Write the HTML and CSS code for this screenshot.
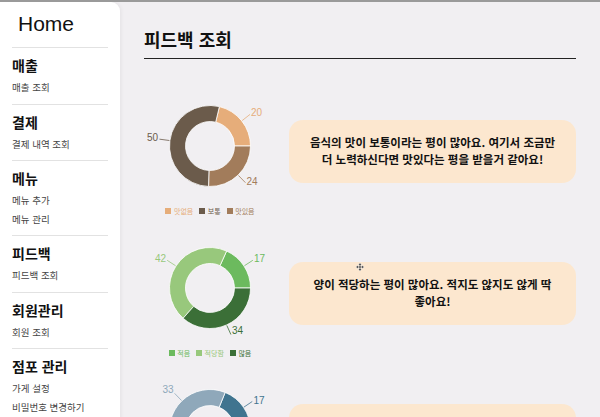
FILE: index.html
```html
<!DOCTYPE html>
<html lang="ko">
<head>
<meta charset="utf-8">
<title>피드백 조회</title>
<link rel="stylesheet" href="styles.css">
</head>
<body>
<aside class="sidebar">
  <div class="home">Home</div>
  <section class="nav-sec">
    <div class="nav-title">매출</div>
    <ul class="nav-sub"><li>매출 조회</li></ul>
  </section>
  <section class="nav-sec">
    <div class="nav-title">결제</div>
    <ul class="nav-sub"><li>결제 내역 조회</li></ul>
  </section>
  <section class="nav-sec">
    <div class="nav-title">메뉴</div>
    <ul class="nav-sub"><li>메뉴 추가</li><li>메뉴 관리</li></ul>
  </section>
  <section class="nav-sec">
    <div class="nav-title">피드백</div>
    <ul class="nav-sub"><li>피드백 조회</li></ul>
  </section>
  <section class="nav-sec">
    <div class="nav-title">회원관리</div>
    <ul class="nav-sub"><li>회원 조회</li></ul>
  </section>
  <section class="nav-sec">
    <div class="nav-title">점포 관리</div>
    <ul class="nav-sub"><li>가게 설정</li><li>비밀번호 변경하기</li></ul>
  </section>
</aside>

<main class="main">
  <h1 class="page-title">피드백 조회</h1>

  <div class="row">
    <div class="chart">
      <svg class="donut" width="132" height="120" viewBox="0 0 132 120">
        <g stroke="#fff" stroke-width="0.8">
          <path fill="#e6ad7a" d="M106.5 60 A40.5 40.5 0 0 0 75.38 20.6 L71.68 36.17 A24.5 24.5 0 0 1 90.5 60 Z"/>
          <path fill="#6b5b4b" d="M75.38 20.6 A40.5 40.5 0 1 0 64.66 100.48 L65.19 84.49 A24.5 24.5 0 1 1 71.68 36.17 Z"/>
          <path fill="#a27c5b" d="M64.66 100.48 A40.5 40.5 0 0 0 106.5 60 L90.5 60 A24.5 24.5 0 0 1 65.19 84.49 Z"/>
        </g>
        <g fill="none" stroke-width="0.8">
          <path stroke="#e6ad7a" d="M98.18 34.59 L106.02 28.39"/>
          <path stroke="#6b5b4b" d="M25.37 54.51 L15.46 53.17"/>
          <path stroke="#a27c5b" d="M94.48 89.49 L101.43 96.68"/>
        </g>
        <text class="lbl" x="107" y="30" fill="#e6ad7a">20</text>
        <text class="lbl" x="14" y="55" fill="#6b5b4b" text-anchor="end">50</text>
        <text class="lbl" x="102.5" y="98.5" fill="#a27c5b">24</text>
      </svg>
      <ul class="legend">
        <li class="lg-item" style="color:#e6ad7a"><span class="sq"></span>맛없음</li>
        <li class="lg-item" style="color:#6b5b4b"><span class="sq"></span>보통</li>
        <li class="lg-item" style="color:#a27c5b"><span class="sq"></span>맛있음</li>
      </ul>
    </div>
    <div class="card">음식의 맛이 보통이라는 평이 많아요. 여기서 조금만<br>더 노력하신다면 맛있다는 평을 받을거 같아요!</div>
  </div>

  <div class="row">
    <div class="chart">
      <svg class="donut" width="132" height="120" viewBox="0 0 132 120">
        <g stroke="#fff" stroke-width="0.8">
          <path fill="#6cba5e" d="M106.5 60 A40.5 40.5 0 0 0 82.6 23.06 L76.04 37.65 A24.5 24.5 0 0 1 90.5 60 Z"/>
          <path fill="#98c87c" d="M82.6 23.06 A40.5 40.5 0 0 0 39.11 90.29 L49.73 78.32 A24.5 24.5 0 0 1 76.04 37.65 Z"/>
          <path fill="#3b6f37" d="M39.11 90.29 A40.5 40.5 0 0 0 106.5 60 L90.5 60 A24.5 24.5 0 0 1 49.73 78.32 Z"/>
        </g>
        <g fill="none" stroke-width="0.8">
          <path stroke="#6cba5e" d="M100.42 37.73 L108.82 32.3"/>
          <path stroke="#98c87c" d="M31.58 37.73 L23.18 32.3"/>
          <path stroke="#3b6f37" d="M82.81 97.4 L86.9 106.52"/>
        </g>
        <text class="lbl" x="110" y="34" fill="#6cba5e">17</text>
        <text class="lbl" x="22" y="34" fill="#98c87c" text-anchor="end">42</text>
        <text class="lbl" x="88" y="106" fill="#3b6f37">34</text>
      </svg>
      <ul class="legend">
        <li class="lg-item" style="color:#6cba5e"><span class="sq"></span>적음</li>
        <li class="lg-item" style="color:#98c87c"><span class="sq"></span>적당함</li>
        <li class="lg-item" style="color:#3b6f37"><span class="sq"></span>많음</li>
      </ul>
    </div>
    <div class="card">양이 적당하는 평이 많아요. 적지도 않지도 않게 딱<br>좋아요!</div>
  </div>

  <div class="row">
    <div class="chart">
      <svg class="donut" width="132" height="120" viewBox="0 0 132 120">
        <g stroke="#fff" stroke-width="0.8">
          <path fill="#40748f" d="M106.5 60 A40.5 40.5 0 0 0 81.17 22.45 L75.18 37.28 A24.5 24.5 0 0 1 90.5 60 Z"/>
          <path fill="#8fa8ba" d="M81.17 22.45 A40.5 40.5 0 0 0 27.94 73.85 L42.98 68.38 A24.5 24.5 0 0 1 75.18 37.28 Z"/>
          <path fill="#2c4d63" d="M27.94 73.85 A40.5 40.5 0 0 0 106.5 60 L90.5 60 A24.5 24.5 0 0 1 42.98 68.38 Z"/>
        </g>
        <g fill="none" stroke-width="0.8">
          <path stroke="#40748f" d="M99.99 37.07 L108.28 31.48"/>
          <path stroke="#8fa8ba" d="M37.52 30.51 L30.57 23.32"/>
        </g>
        <text class="lbl" x="109.5" y="34" fill="#40748f">17</text>
        <text class="lbl" x="29.5" y="23" fill="#8fa8ba" text-anchor="end">33</text>
      </svg>
      <div class="legend"></div>
    </div>
    <div class="card"></div>
  </div>
</main>

<svg class="cursor" width="8" height="8" viewBox="0 0 16 16">
  <path d="M8 0 L11.5 3.5 H9.2 V6.8 H12.5 V4.5 L16 8 L12.5 11.5 V9.2 H9.2 V12.5 H11.5 L8 16 L4.5 12.5 H6.8 V9.2 H3.5 V11.5 L0 8 L3.5 4.5 V6.8 H6.8 V3.5 H4.5 Z" fill="#111" stroke="#fff" stroke-width="1"/>
</svg>
</body>
</html>
```

FILE: styles.css
```css
html, body {
  margin: 0;
  padding: 0;
  height: 417px;
  overflow: hidden;
}

body {
  box-sizing: border-box;
  border-top: 2px solid #9a9a9a;
  background: #f1eff2;
  display: flex;
  font-family: "Noto Sans CJK KR", "Noto Sans", sans-serif;
  color: #111;
  position: relative;
}

.sidebar {
  width: 120px;
  flex: 0 0 120px;
  height: 440px;
  background: #fff;
  border-radius: 0 9px 0 0;
  box-shadow: 1px 0 4px rgba(0, 0, 0, 0.06);
}

.home {
  font-family: "Liberation Sans", Arial, sans-serif;
  font-size: 21px;
  line-height: 26px;
  padding: 9px 0 0 18px;
  margin-bottom: 10px;
  color: #111;
}

.nav-sec {
  margin: 0 12px;
  border-top: 1px solid #e2e2e2;
  padding: 7px 0 7px;
}

.nav-title {
  font-size: 14px;
  font-weight: 700;
  line-height: 20px;
  color: #111;
}

.nav-sub {
  list-style: none;
  margin: 3px 0 0;
  padding: 0;
}

.nav-sub li {
  font-size: 9.5px;
  line-height: 18.5px;
  color: #444;
}

.main {
  flex: 1;
  padding: 0 24px;
  overflow: hidden;
}

.page-title {
  margin: 0;
  padding: 24px 0 6px;
  font-size: 18px;
  line-height: 26px;
  font-weight: 700;
  color: #111;
  border-bottom: 1px solid #222;
}

.row {
  display: flex;
  align-items: center;
  margin-top: 12px;
}

.page-title + .row {
  margin-top: 27px;
}

.chart {
  width: 132px;
  flex: 0 0 132px;
  display: flex;
  flex-direction: column;
}

.donut {
  display: block;
}

.lbl {
  font-family: "Liberation Sans", Arial, sans-serif;
  font-size: 10px;
}

.legend {
  list-style: none;
  margin: 0;
  padding: 0;
  height: 10px;
  display: flex;
  justify-content: center;
  align-items: center;
  gap: 6px;
}

.lg-item {
  display: flex;
  align-items: center;
  gap: 2.5px;
  font-size: 7px;
  line-height: 10px;
}

.sq {
  width: 6px;
  height: 6px;
  background: currentColor;
}

.card {
  flex: 1;
  margin-left: 13px;
  height: 63px;
  box-sizing: border-box;
  padding: 0 12px;
  background: #fce7cf;
  border-radius: 14px;
  display: flex;
  align-items: center;
  justify-content: center;
  text-align: center;
  font-size: 11.5px;
  line-height: 17px;
  font-weight: 700;
  color: #111;
}

.cursor {
  position: absolute;
  left: 356px;
  top: 261px;
}
```
